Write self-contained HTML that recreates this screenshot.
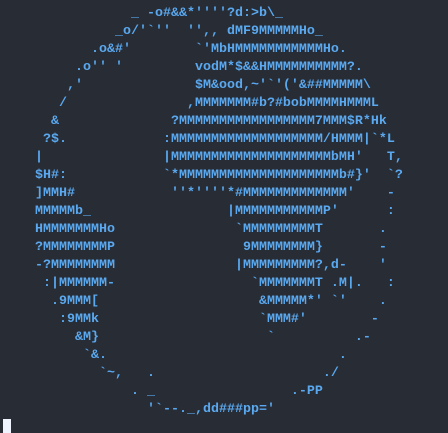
<!DOCTYPE html>
<html><head><meta charset="utf-8"><style>
html,body{margin:0;padding:0;background:#282c34;width:448px;height:433px;overflow:hidden}
pre{margin:0;position:absolute;left:3px;top:5px;font-family:"Liberation Mono",monospace;font-size:13.33px;line-height:18px;color:#5aa9f0;font-weight:bold;white-space:pre}
.cur{position:absolute;left:3px;top:419px;width:8px;height:14px;background:#f0f4ff}
</style></head><body>
<pre>                _ -o#&amp;&amp;*''''?d:&gt;b\_
              _o/'`''  '',, dMF9MMMMMHo_
           .o&amp;#'        `'MbHMMMMMMMMMMMHo.
         .o'' '         vodM*$&amp;&amp;HMMMMMMMMMM?.
        ,'              $M&amp;ood,~'`'('&amp;##MMMMM\
       /               ,MMMMMMM#b?#bobMMMMHMMML
      &amp;              ?MMMMMMMMMMMMMMMMM7MMM$R*Hk
     ?$.            :MMMMMMMMMMMMMMMMMMM/HMMM|`*L
    |               |MMMMMMMMMMMMMMMMMMMMbMH'   T,
    $H#:            `*MMMMMMMMMMMMMMMMMMMMb#}'  `?
    ]MMH#            ''*''''*#MMMMMMMMMMMMM'    -
    MMMMMb_                 |MMMMMMMMMMMP'      :
    HMMMMMMMHo               `MMMMMMMMMT       .
    ?MMMMMMMMP                9MMMMMMMM}       -
    -?MMMMMMMM               |MMMMMMMMM?,d-    '
     :|MMMMMM-                 `MMMMMMMT .M|.   :
      .9MMM[                    &amp;MMMMM*' `'    .
       :9MMk                    `MMM#'        -
         &amp;M}                     `          .-
          `&amp;.                             .
            `~,   .                     ./
                . _                 .-PP
                  '`--._,dd###pp='</pre>
<div class="cur"></div>
</body></html>
